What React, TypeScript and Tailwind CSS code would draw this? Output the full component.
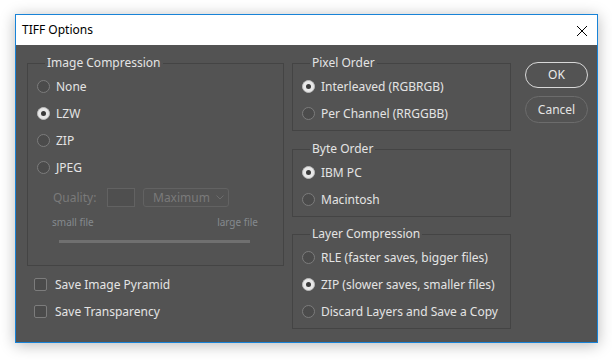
import type { ReactNode } from 'react'

const font = { fontFamily: '"Noto Sans", "Open Sans", Arial, sans-serif' }

function Radio({ checked, label }: { checked?: boolean; label: string }) {
  return (
    <div className="flex h-[27px] items-center">
      {checked ? (
        <span className="flex h-[13px] w-[13px] shrink-0 items-center justify-center rounded-full border border-[#bdbdbd] bg-[#e8e8e8]">
          <span className="h-[5px] w-[5px] rounded-full bg-[#3a3a3a]" />
        </span>
      ) : (
        <span className="h-[13px] w-[13px] shrink-0 rounded-full border border-[#7c7c7c] bg-[#4b4b4b]" />
      )}
      <span className="ml-[6px] text-[12px] leading-none text-[#e4e4e4]">{label}</span>
    </div>
  )
}

function Checkbox({ label }: { label: string }) {
  return (
    <div className="flex h-[27px] items-center">
      <span className="h-[13px] w-[13px] shrink-0 rounded-[2px] border border-[#7c7c7c] bg-[#4b4b4b]" />
      <span className="ml-[8px] text-[12px] leading-none text-[#e4e4e4]">{label}</span>
    </div>
  )
}

function Group({ title, className, children }: { title: string; className?: string; children: ReactNode }) {
  return (
    <fieldset className={'border border-[#444444] ' + (className ?? '')}>
      <legend className="ml-[8px] px-[2px] text-[12px] leading-[16px] text-[#e4e4e4]">{title}</legend>
      {children}
    </fieldset>
  )
}

export default function App() {
  return (
    <div className="h-[360px] w-[612px] bg-white pl-[15px] pt-[14px]" style={font}>
      <div className="flex h-[329px] w-[583px] flex-col border border-[#1883d7] shadow-[0_2px_14px_rgba(0,0,0,0.28)]">
        <div className="flex h-[30px] items-center justify-between bg-white pl-[6px] pr-[9px]">
          <span className="text-[12px] text-black">TIFF Options</span>
          <svg width="12" height="12" viewBox="0 0 12 12" className="mt-[1px]">
            <path d="M1 1 L11 11 M11 1 L1 11" stroke="#000" strokeWidth="1" />
          </svg>
        </div>
        <div className="flex flex-1 bg-[#535353] pl-[11px] pt-[10px]">
          <div className="flex w-[257px] flex-col">
            <Group title="Image Compression" className="h-[211px] pl-[9px] pt-[2px]">
              <Radio label="None" />
              <Radio checked label="LZW" />
              <Radio label="ZIP" />
              <Radio label="JPEG" />
              <div className="mt-[7px] flex h-[19px] items-center pl-[16px] text-[12px] text-[#7a7a7a]">
                <span className="w-[54px]">Quality:</span>
                <span className="h-[19px] w-[28px] border border-[#626262] bg-[#4f4f4f]" />
                <span className="ml-[8px] flex h-[19px] w-[86px] items-center justify-between rounded-[3px] border border-[#626262] pl-[9px] pr-[4px]">
                  <span>Maximum</span>
                  <svg width="8" height="5" viewBox="0 0 8 5">
                    <path d="M0.5 0.5 L4 4 L7.5 0.5" stroke="#6c6c6c" fill="none" strokeWidth="1" />
                  </svg>
                </span>
              </div>
              <div className="mt-[9px] flex justify-between pl-[15px] pr-[25px] text-[10px] leading-[12px] text-[#858a8e]">
                <span>small file</span>
                <span>large file</span>
              </div>
              <div className="ml-[22px] mt-[12px] h-[3px] w-[191px] bg-[#707070]" />
            </Group>
            <div className="mt-[5px] pl-[7px]">
              <Checkbox label="Save Image Pyramid" />
              <Checkbox label="Save Transparency" />
            </div>
          </div>

          <div className="ml-[8px] flex w-[219px] flex-col">
            <Group title="Pixel Order" className="pb-[3px] pl-[9px] pt-[2px]">
              <Radio checked label="Interleaved (RGBRGB)" />
              <Radio label="Per Channel (RRGGBB)" />
            </Group>
            <Group title="Byte Order" className="mt-[10px] pb-[3px] pl-[9px] pt-[2px]">
              <Radio checked label="IBM PC" />
              <Radio label="Macintosh" />
            </Group>
            <Group title="Layer Compression" className="mt-[9px] pb-[3px] pl-[9px] pt-[2px]">
              <Radio label="RLE (faster saves, bigger files)" />
              <Radio checked label="ZIP (slower saves, smaller files)" />
              <Radio label="Discard Layers and Save a Copy" />
            </Group>
          </div>

          <div className="ml-[14px] flex w-[63px] flex-col pt-[7px]">
            <button className="h-[26px] rounded-full border-[1.5px] border-[#d8d8d8] text-[12px] text-[#ececec]">OK</button>
            <button className="mt-[8px] h-[27px] rounded-full border border-[#6c6c6c] text-[12px] text-[#e4e4e4]">Cancel</button>
          </div>
        </div>
      </div>
    </div>
  )
}
